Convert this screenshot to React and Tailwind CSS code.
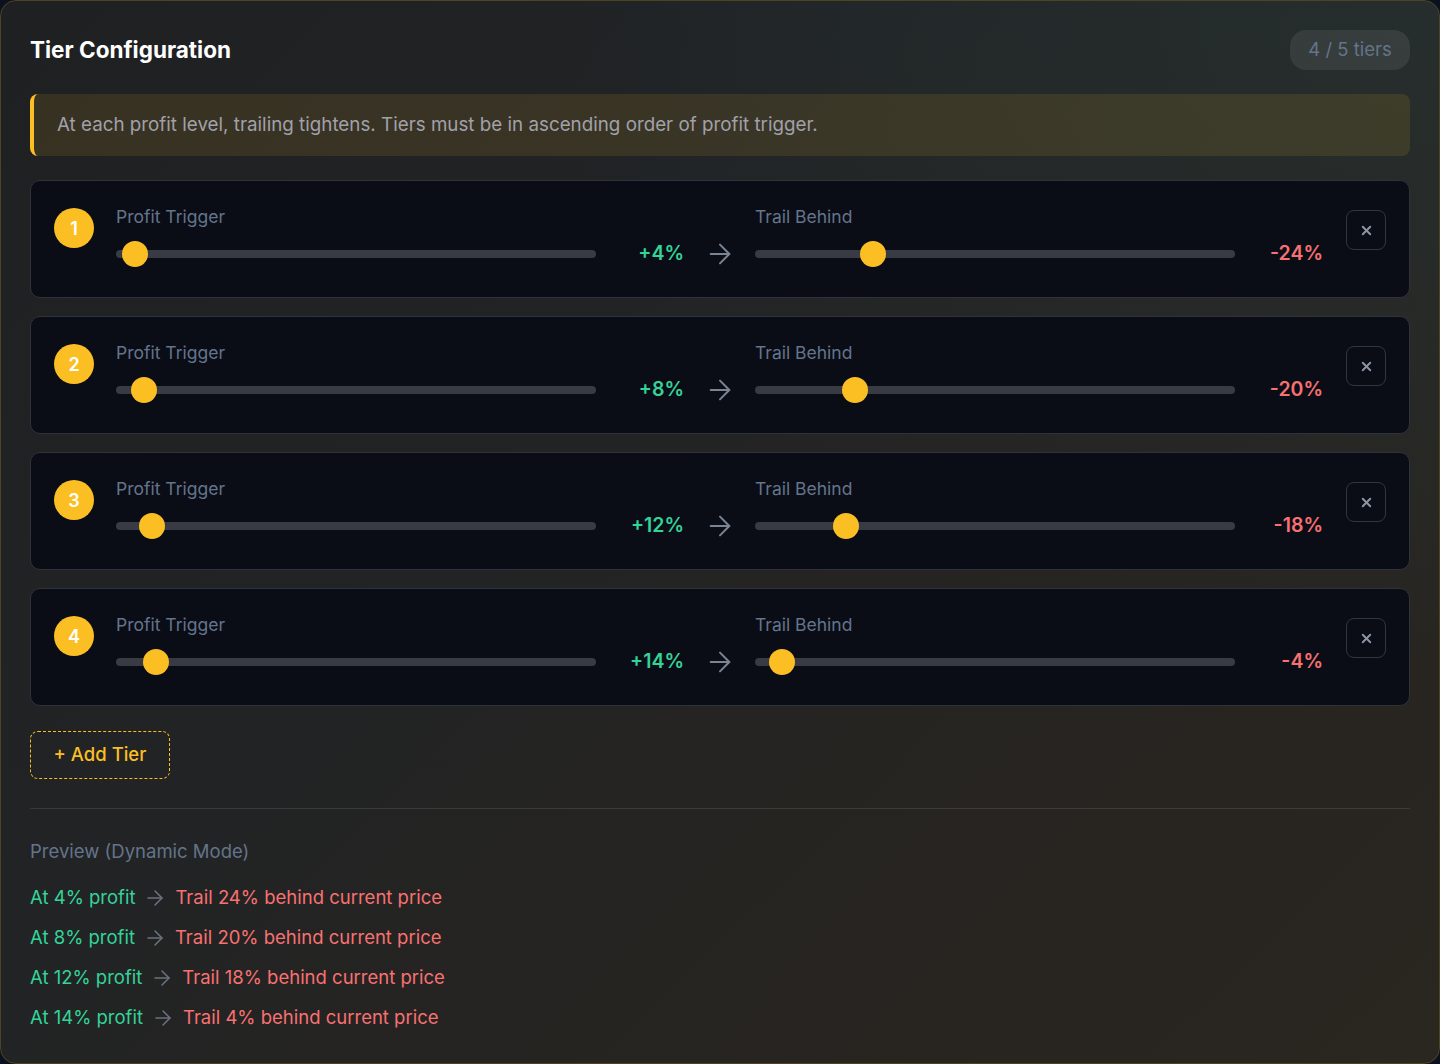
import React from "react";
import { ArrowRight, X } from "lucide-react";

const tiers = [
  { id: 1, profit: 4, trail: 24 },
  { id: 2, profit: 8, trail: 20 },
  { id: 3, profit: 12, trail: 18 },
  { id: 4, profit: 14, trail: 4 },
];

// Slider geometry: track is 480px, thumb 26px, thumb travels 454px.
function thumbLeft(value, min, max) {
  const pct = (value - min) / (max - min);
  return pct * 454;
}

function Slider({ value, min, max }) {
  return (
    <div className="relative flex h-[26px] w-[480px] items-center">
      <div className="h-2 w-full rounded-full bg-[#383b44]" />
      <div
        className="absolute top-0 h-[26px] w-[26px] rounded-full bg-[#fbbf24]"
        style={{ left: `${thumbLeft(value, min, max)}px` }}
      />
    </div>
  );
}

function TierRow({ tier }) {
  return (
    <div className="flex h-[118px] items-start rounded-[10px] border border-[#2e323a] bg-[#0a0d16] px-[23px] pt-[22px]">
      <div className="mt-[5px] flex h-10 w-10 shrink-0 items-center justify-center rounded-full bg-[#fbbf24] text-[18px] font-semibold text-white">
        {tier.id}
      </div>
      <div className="ml-[22px] flex items-end">
        <div className="flex flex-col">
          <div className="text-[17.5px] leading-7 text-[#64748b]">Profit Trigger</div>
          <div className="mt-[10px]">
            <Slider value={tier.profit} min={1} max={220} />
          </div>
        </div>
        <div className="flex h-[26px] w-[88px] items-center justify-end text-[19.5px] font-semibold text-[#34d399]">
          +{tier.profit}%
        </div>
        <div className="flex h-[26px] w-[71px] items-center justify-center text-[#7b8494]">
          <ArrowRight size={32} strokeWidth={1.5} />
        </div>
        <div className="flex flex-col">
          <div className="text-[17.5px] leading-7 text-[#64748b]">Trail Behind</div>
          <div className="mt-[10px]">
            <Slider value={tier.trail} min={1} max={100} />
          </div>
        </div>
        <div className="flex h-[26px] w-[88px] items-center justify-end text-[19.5px] font-semibold text-[#f87171]">
          -{tier.trail}%
        </div>
      </div>
      <button className="ml-[23px] mt-[7px] flex h-10 w-10 shrink-0 items-center justify-center rounded-lg border border-[#33363e] text-[#8b95a5]">
        <X size={15} strokeWidth={3} />
      </button>
    </div>
  );
}

export default function App() {
  return (
    <div
      className="min-h-[1064px] w-[1440px] bg-[#0b1120]"
      style={{ fontFamily: "Inter, 'Noto Sans', sans-serif" }}
    >
      <div className="h-[1064px] w-[1440px] overflow-hidden rounded-2xl border border-[#4f4422] bg-[linear-gradient(135deg,#1f2022_0%,#212325_35%,#262421_65%,#2a2620_100%)]">
        <div className="h-full w-full bg-[radial-gradient(ellipse_at_top_right,rgba(40,62,62,0.4),transparent_45%)] px-[29px] pt-[29px]">
          {/* Header */}
          <div className="flex h-10 items-center justify-between">
            <h2 className="text-[22.5px] font-bold text-white">Tier Configuration</h2>
            <div className="flex h-10 w-[120px] items-center justify-center rounded-2xl bg-white/[0.08] text-[18.5px] text-[#64748b]">
              4 / 5 tiers
            </div>
          </div>

          {/* Info note */}
          <div className="mt-6 flex h-[62px] items-center rounded-lg border-l-4 border-[#fbbf24] bg-[#fbbf24]/[0.11] pl-[23px] text-[18.8px] text-[#a1a1aa]">
            At each profit level, trailing tightens. Tiers must be in ascending order of profit trigger.
          </div>

          {/* Tiers */}
          <div className="mt-6 flex flex-col gap-[18px]">
            {tiers.map((t) => (
              <TierRow key={t.id} tier={t} />
            ))}
          </div>

          {/* Add tier */}
          <button className="mt-[25px] flex h-12 w-[140px] items-center justify-center rounded-lg border-[1.5px] border-dashed border-[#fbbf24] text-[18.5px] font-medium text-[#fbbf24]">
            + Add Tier
          </button>

          <div className="mt-[29px] h-px w-full bg-white/10" />

          {/* Preview */}
          <div className="mt-[28px] text-[18.5px] leading-7 text-[#64748b]">Preview (Dynamic Mode)</div>
          <div className="mt-[13px] flex flex-col">
            {tiers.map((t) => (
              <div key={t.id} className="flex h-10 items-center text-[18.5px]">
                <span className="text-[#34d399]">At {t.profit}% profit</span>
                <span className="mx-[8px] flex items-center text-[#6b7280]">
                  <ArrowRight size={24} strokeWidth={1.5} />
                </span>
                <span className="text-[#f87171]">Trail {t.trail}% behind current price</span>
              </div>
            ))}
          </div>
        </div>
      </div>
    </div>
  );
}
